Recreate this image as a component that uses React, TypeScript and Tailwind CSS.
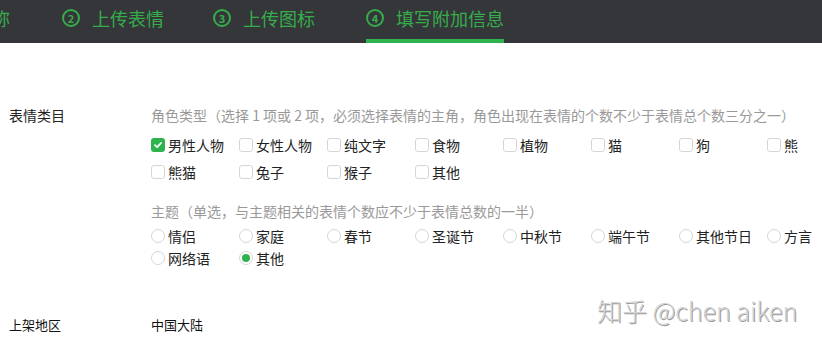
import React from "react";

const font = { fontFamily: '"Microsoft YaHei", "Noto Sans CJK SC", "Liberation Sans", sans-serif' };

function Check({ checked }: { checked?: boolean }) {
  return checked ? (
    <span className="w-[14px] h-[14px] rounded-[3px] bg-[#2fb34f] flex items-center justify-center shrink-0">
      <svg width="10" height="10" viewBox="0 0 10 10"><path d="M2 5.2 L4.2 7.2 L8 3" stroke="white" strokeWidth="1.8" fill="none" strokeLinecap="round" strokeLinejoin="round" /></svg>
    </span>
  ) : (
    <span className="w-[14px] h-[14px] rounded-[3px] border border-[#d6d6d6] bg-white shrink-0" />
  );
}

function Radio({ checked }: { checked?: boolean }) {
  return (
    <span className="w-[14px] h-[14px] rounded-full border border-[#d6d6d6] bg-white shrink-0 flex items-center justify-center">
      {checked && <span className="w-[8px] h-[8px] rounded-full bg-[#2fb34f]" />}
    </span>
  );
}

const roles = [["男性人物", "女性人物", "纯文字", "食物", "植物", "猫", "狗", "熊"], ["熊猫", "兔子", "猴子", "其他"]];
const themes = [["情侣", "家庭", "春节", "圣诞节", "中秋节", "端午节", "其他节日", "方言"], ["网络语", "其他"]];

function Circled({ n }: { n: string }) {
  return (
    <span className="w-[18px] h-[18px] rounded-full border-2 border-[#35ad4a] flex items-center justify-center text-[11px] font-bold leading-none">{n}</span>
  );
}

export default function App() {
  return (
    <div className="w-[822px] h-[344px] bg-white relative overflow-hidden" style={font}>
      <div className="h-[43px] bg-[#35363a] text-[18px] text-[#35ad4a] relative">
        <div className="absolute left-[-8px] top-[6px] leading-[24px]">称</div>
        <div className="absolute left-[62px] top-[6px] h-[24px] flex items-center gap-[12px]"><Circled n="2" /><span>上传表情</span></div>
        <div className="absolute left-[213px] top-[6px] h-[24px] flex items-center gap-[12px]"><Circled n="3" /><span>上传图标</span></div>
        <div className="absolute left-[366px] top-[6px] h-[24px] flex items-center gap-[12px]"><Circled n="4" /><span>填写附加信息</span></div>
        <div className="absolute left-[366px] w-[138px] bottom-0 h-[4px] bg-[#2fb34f]" />
      </div>
      <div className="flex pt-[62px] pl-[9px] text-[14px] text-[#222]">
        <div className="w-[142px] shrink-0 leading-[20px]">表情类目</div>
        <div className="flex flex-col">
          <div className="text-[#999] leading-[20px] whitespace-nowrap">角色类型（选择 1 项或 2 项，必须选择表情的主角，角色出现在表情的个数不少于表情总个数三分之一）</div>
          <div className="flex flex-col gap-[7px] mt-[10px]">
            {roles.map((row, i) => (
              <div key={i} className="flex">
                {row.map((t, j) => (
                  <div key={t} className="w-[88px] shrink-0 h-[20px] flex items-center gap-[3px]">
                    <Check checked={i === 0 && j === 0} />
                    <span>{t}</span>
                  </div>
                ))}
              </div>
            ))}
          </div>
          <div className="text-[#999] leading-[20px] mt-[19px] whitespace-nowrap">主题（单选，与主题相关的表情个数应不少于表情总数的一半）</div>
          <div className="flex flex-col gap-[2px] mt-[5px]">
            {themes.map((row, i) => (
              <div key={i} className="flex">
                {row.map((t, j) => (
                  <div key={t} className="w-[88px] shrink-0 h-[20px] flex items-center gap-[3px]">
                    <Radio checked={i === 1 && j === 1} />
                    <span>{t}</span>
                  </div>
                ))}
              </div>
            ))}
          </div>
        </div>
      </div>
      <div className="flex pl-[9px] mt-[47px] text-[13px] text-[#111] leading-[20px]">
        <div className="w-[142px] shrink-0">上架地区</div>
        <div>中国大陆</div>
      </div>
      <div className="absolute left-[597px] top-[292px] text-[25px] text-[#d4d4d4] whitespace-nowrap" style={{ fontFamily: '"Noto Sans CJK SC", "Liberation Sans", sans-serif', fontWeight: 300, textShadow: "1px 1px 0 #999, -0.5px -0.5px 0 #fff" }}>知乎 @chen aiken</div>
    </div>
  );
}
